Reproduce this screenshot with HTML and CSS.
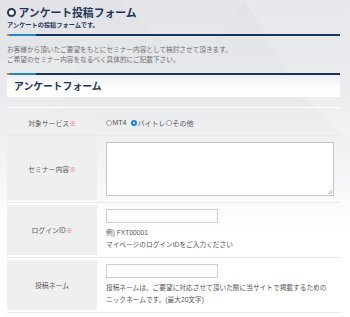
FILE: index.html
```html
<!DOCTYPE html>
<html lang="ja">
<head>
<meta charset="utf-8">
<title>アンケート投稿フォーム</title>
<link rel="stylesheet" href="styles.css">
</head>
<body>
<svg class="bg-deco" width="350" height="317" viewBox="0 0 350 317" aria-hidden="true">
  <polygon points="245,0 350,0 350,60 300,95" fill="#ffffff" fill-opacity="0.18"/>
  <polygon points="120,0 245,0 190,70" fill="#ffffff" fill-opacity="0.10"/>
  <polygon points="300,95 350,60 350,140" fill="#ffffff" fill-opacity="0.2"/>
  <polygon points="0,60 90,40 60,110 0,120" fill="#ffffff" fill-opacity="0.12"/>
</svg>
<div class="page">
  <header class="page-head">
    <h1 class="title"><span class="title-icon"></span>アンケート投稿フォーム</h1>
    <p class="subtitle">アンケートの投稿フォームです。</p>
  </header>
  <div class="rule"><span class="rule-orange"></span><span class="rule-blue"></span></div>
  <p class="intro">お客様から頂いたご要望をもとにセミナー内容として検討させて頂きます。<br>ご希望のセミナー内容をなるべく具体的にご記載下さい。</p>

  <section class="form-section">
    <div class="rule"><span class="rule-orange"></span><span class="rule-blue"></span></div>
    <h2 class="section-title">アンケートフォーム</h2>

    <div class="form-table">
      <div class="row">
        <div class="label">対象サービス<span class="req">※</span></div>
        <div class="value value-radio">
          <label class="radio"><span class="radio-dot"></span>MT4</label>
          <label class="radio"><span class="radio-dot checked"></span>バイトレ</label>
          <label class="radio"><span class="radio-dot"></span>その他</label>
        </div>
      </div>
      <div class="row">
        <div class="label">セミナー内容<span class="req">※</span></div>
        <div class="value">
          <div class="textarea"><span class="grip"></span></div>
        </div>
      </div>
      <div class="row">
        <div class="label">ログインID<span class="req">※</span></div>
        <div class="value">
          <div class="input"></div>
          <p class="note">例) FXT00001<br>マイページのログインIDをご入力ください</p>
        </div>
      </div>
      <div class="row">
        <div class="label">投稿ネーム</div>
        <div class="value">
          <div class="input"></div>
          <p class="note">投稿ネームは、ご要望に対応させて頂いた際に当サイトで掲載するための<br>ニックネームです。(最大20文字)</p>
        </div>
      </div>
    </div>
  </section>
</div>
</body>
</html>
```

FILE: styles.css
```css
html, body {
  margin: 0;
  padding: 0;
}
body {
  width: 350px;
  height: 317px;
  overflow: hidden;
  position: relative;
  font-family: "Noto Sans CJK JP", "Liberation Sans", sans-serif;
  background: linear-gradient(to bottom, #e1e3e7 0px, #e6e8eb 90px, #f4f5f6 170px, #ffffff 230px);
  color: #555;
}
.bg-deco {
  position: absolute;
  left: 0;
  top: 0;
  z-index: 0;
}
.page {
  position: relative;
  z-index: 1;
  padding: 0 10px 0 7px;
}
.page-head {
  padding-top: 5px;
}
.title {
  margin: 0;
  display: flex;
  align-items: center;
  height: 14px;
  font-size: 10.8px;
  line-height: 14px;
  font-weight: bold;
  color: #1d3657;
}
.title-icon {
  width: 5px;
  height: 5px;
  border: 2.3px solid #1d3657;
  border-radius: 50%;
  background: #fff;
  margin-right: 2.5px;
  flex: none;
}
.subtitle {
  margin: 0;
  padding-top: 1px;
  font-size: 6.2px;
  line-height: 9px;
  font-weight: bold;
  color: #1d3657;
}
.rule {
  display: flex;
  height: 2px;
  background: #183659;
}
.page-head + .rule {
  margin-top: 5px;
}
.rule-orange {
  width: 2px;
  background: #f08300;
}
.rule-blue {
  width: 27px;
  background: #1e86cf;
}
.intro {
  margin: 8px 0 0;
  font-size: 6.65px;
  line-height: 10px;
  color: #707070;
}
.form-section {
  margin-top: 9px;
}
.section-title {
  margin: 0;
  height: 22px;
  padding-left: 7px;
  font-size: 9.8px;
  line-height: 22px;
  font-weight: bold;
  color: #1d3657;
  background: linear-gradient(to bottom, #eef0f2, #ffffff 70%);
}
.form-table {
  margin-top: 10px;
  border-top: 1px solid rgba(255, 255, 255, 0.9);
  padding-top: 2px;
}
.row {
  display: grid;
  grid-template-columns: 90px 1fr;
  padding: 2px 0;
  border-bottom: 1px solid #e9eaec;
}
.label {
  background: #efefef;
  display: flex;
  align-items: center;
  justify-content: center;
  font-size: 6.9px;
  color: #5a5a5a;
}
.req {
  color: #ec6a73;
}
.value {
  padding: 4px 6px 4px 9px;
}
.value-radio {
  display: flex;
  align-items: center;
  height: 13px;
  font-family: "Liberation Sans", "Noto Sans CJK JP", sans-serif;
  font-size: 7px;
  color: #555;
}
.radio {
  display: flex;
  align-items: center;
  margin-right: 0.5px;
}
.radio + .radio {
  margin-left: 4px;
}
.radio:last-child {
  margin-left: 0;
}
.radio-dot {
  width: 4px;
  height: 4px;
  border: 0.8px solid #9a9a9a;
  border-radius: 50%;
  background: #fff;
  margin-right: 0.5px;
  flex: none;
}
.radio-dot.checked {
  width: 2px;
  height: 2px;
  border: 2px solid #1a7fe3;
  background: #fff;
}
.textarea {
  position: relative;
  height: 52px;
  border: 1px solid #c8c8c8;
  background: #fff;
}
.grip {
  position: absolute;
  right: 1px;
  bottom: 1px;
  width: 4px;
  height: 4px;
  background: linear-gradient(135deg, transparent 45%, #b5b5b5 45%, #b5b5b5 55%, transparent 55%, transparent 75%, #b5b5b5 75%, #b5b5b5 85%, transparent 85%);
}
.input {
  width: 110px;
  height: 12px;
  border: 1px solid #cfcfcf;
  background: #fff;
}
.note {
  margin: 4px 0 0;
  font-family: "Liberation Sans", "Noto Sans CJK JP", sans-serif;
  font-size: 6.7px;
  line-height: 12px;
  color: #555;
}
```
